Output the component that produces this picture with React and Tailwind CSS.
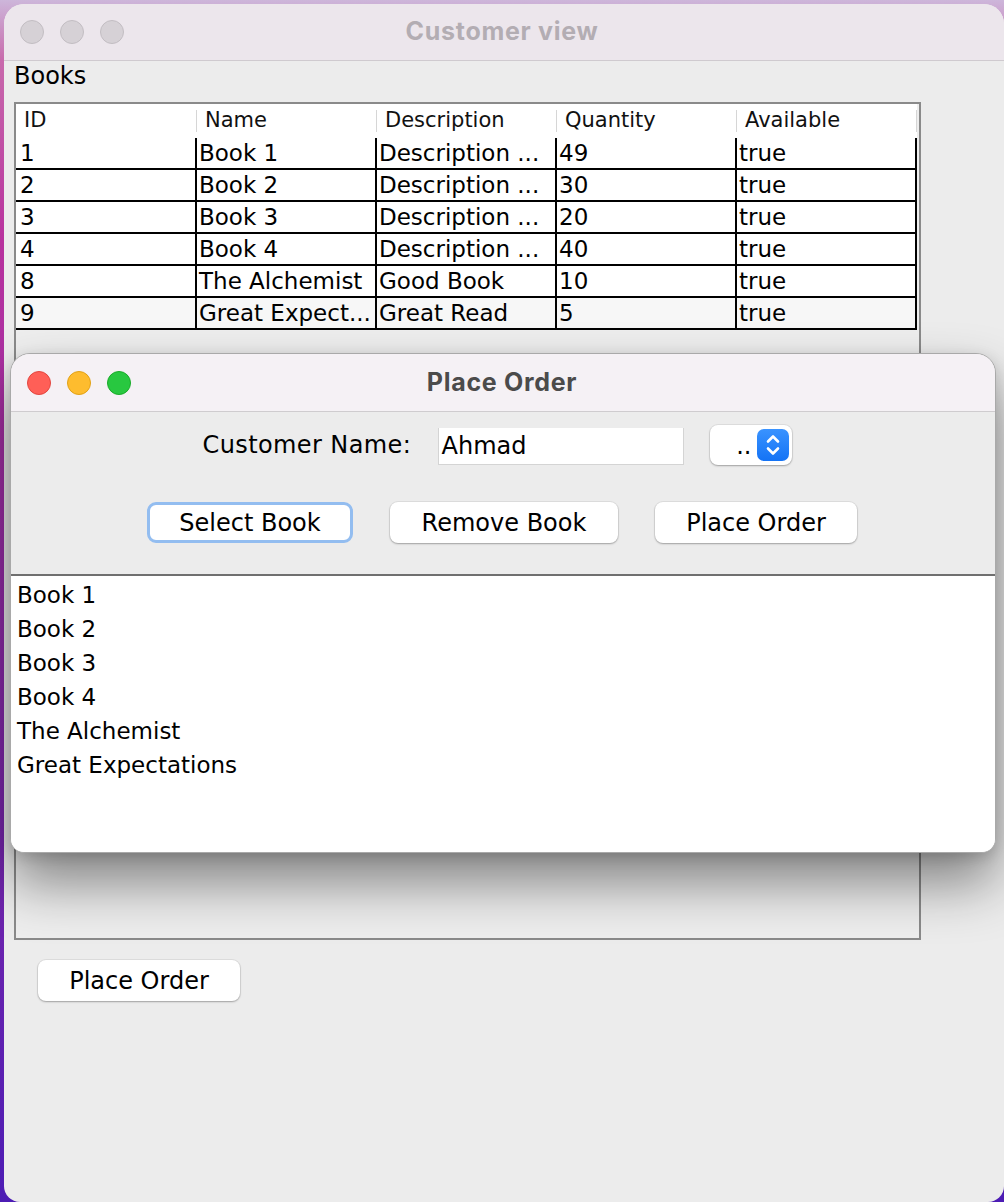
import React from 'react';

const books = [
  { id: 1, name: 'Book 1', desc: 'Description ...', qty: 49, avail: 'true' },
  { id: 2, name: 'Book 2', desc: 'Description ...', qty: 30, avail: 'true' },
  { id: 3, name: 'Book 3', desc: 'Description ...', qty: 20, avail: 'true' },
  { id: 4, name: 'Book 4', desc: 'Description ...', qty: 40, avail: 'true' },
  { id: 8, name: 'The Alchemist', desc: 'Good Book', qty: 10, avail: 'true' },
  { id: 9, name: 'Great Expect...', desc: 'Great Read', qty: 5, avail: 'true' },
];

const selected = ['Book 1', 'Book 2', 'Book 3', 'Book 4', 'The Alchemist', 'Great Expectations'];

const columns = ['ID', 'Name', 'Description', 'Quantity', 'Available'];

// mac style push button
const MacButton = ({ children, width, focused }) => (
  <div
    className={
      focused
        ? 'h-[41px] rounded-[9px] border-[3px] border-[#93bdf0] bg-white flex items-center justify-center'
        : 'h-[41px] rounded-[8px] bg-white shadow-[0_1px_2px_rgba(0,0,0,0.28),0_0_0_1px_rgba(0,0,0,0.06)] flex items-center justify-center'
    }
    style={{ width }}
  >
    <span className="text-[24px] leading-none text-black">{children}</span>
  </div>
);

const TrafficLights = ({ active }) => (
  <div className="flex gap-[16px]">
    {active ? (
      <>
        <span className="w-[24px] h-[24px] rounded-full bg-[#ff5f57] border border-[#e2463f]" />
        <span className="w-[24px] h-[24px] rounded-full bg-[#febc2e] border border-[#e1a116]" />
        <span className="w-[24px] h-[24px] rounded-full bg-[#28c840] border border-[#1aab29]" />
      </>
    ) : (
      <>
        <span className="w-[24px] h-[24px] rounded-full bg-[#d6d1d6] border border-[#c2bdc2]" />
        <span className="w-[24px] h-[24px] rounded-full bg-[#d6d1d6] border border-[#c2bdc2]" />
        <span className="w-[24px] h-[24px] rounded-full bg-[#d6d1d6] border border-[#c2bdc2]" />
      </>
    )}
  </div>
);

const App = () => {
  return (
    <div className="relative w-[1004px] h-[1202px] overflow-hidden pt-[4px] pl-[4px] bg-[linear-gradient(180deg,#cdb6da_0%,#c86aac_5%,#b8329e_20%,#8a2aa8_55%,#4c1cb4_100%)] font-['DejaVu_Sans',sans-serif] text-black">
      {/* Customer view window */}
      <div className="w-[1000px] h-[1198px] rounded-t-[20px] rounded-b-[16px] bg-[#ececec] overflow-hidden flex flex-col">
        <div className="relative h-[57px] shrink-0 bg-[#ece6ec] border-b border-[#cfcacf] flex items-center pl-[16px]">
          <TrafficLights />
          <div className="absolute inset-0 flex items-center justify-center pr-[4px] font-['Inter',sans-serif] font-bold text-[25px] text-[#b3adb3] tracking-[0.7px]">
            Customer view
          </div>
        </div>

        <div className="h-[41px] px-[10px] pt-[1px] text-[24px] leading-[28px]">Books</div>

        <div className="ml-[10px] w-[907px] h-[838px] border-2 border-[#8a8a8a] bg-[#eeeeee]">
          <div className="w-[901px] bg-white">
            <div className="grid grid-cols-[181px_180px_180px_180px_180px] h-[34px]">
              {columns.map((c) => (
                <div key={c} className="relative pl-[8px] text-[21px] leading-[33px] text-[#111]">
                  {c}
                  <span className="absolute right-0 top-[6px] h-[22px] w-px bg-[#d6d6d6]" />
                </div>
              ))}
            </div>
            {books.map((b, i) => (
              <div
                key={b.id}
                className={
                  'grid grid-cols-[181px_180px_180px_180px_180px] h-[32px] border-b-2 border-black ' +
                  (i === books.length - 1 ? 'bg-[#f7f7f7]' : 'bg-white')
                }
              >
                {[b.id, b.name, b.desc, b.qty, b.avail].map((v, j) => (
                  <div
                    key={j}
                    className={
                      'border-r-2 border-black text-[23px] leading-[30px] whitespace-nowrap overflow-hidden ' +
                      (j === 0 ? 'pl-[4px]' : 'pl-[2px]')
                    }
                  >
                    {v}
                  </div>
                ))}
              </div>
            ))}
          </div>
        </div>

        <div className="mt-[20px] ml-[34px]">
          <MacButton width={202}>Place Order</MacButton>
        </div>
      </div>

      {/* Place Order dialog */}
      <div className="absolute left-[10px] top-[353px] w-[986px] h-[500px] rounded-t-[20px] rounded-b-[14px] bg-[#ececec] overflow-hidden flex flex-col border border-[#a9a9a9] shadow-[0_30px_55px_rgba(0,0,0,0.45),0_4px_14px_rgba(0,0,0,0.15)]">
        <div className="relative h-[58px] shrink-0 bg-[#f5f1f5] border-b border-[#cfcccf] flex items-center pl-[16px]">
          <TrafficLights active />
          <div className="absolute inset-0 flex items-center justify-center pr-[2px] font-['Inter',sans-serif] font-bold text-[25px] text-[#4b4b4b] tracking-[0.7px]">
            Place Order
          </div>
        </div>

        <div className="pt-[13px] h-[162px] shrink-0">
          <div className="flex items-center justify-center gap-[26px] pr-[12px] h-[40px]">
            <span className="w-[209px] text-[24px] tracking-[0.4px] whitespace-nowrap">Customer Name:</span>
            <div className="w-[246px] h-[37px] mt-[3px] bg-white border-l border-r border-b border-[#d4d4d4] pl-[3px] text-[24px] leading-[36px]">
              Ahmad
            </div>
            <div className="w-[82px] h-[40px] rounded-[8px] bg-white shadow-[0_1px_2px_rgba(0,0,0,0.28),0_0_0_1px_rgba(0,0,0,0.06)] flex items-center justify-end pr-[3px] gap-[5px]">
              <span className="text-[24px] leading-none mt-[2px]">..</span>
              <div className="w-[32px] h-[32px] rounded-[7px] bg-[linear-gradient(180deg,#3a93ff,#1473f5)] flex items-center justify-center">
                <svg width="18" height="26" viewBox="0 0 18 26" fill="none" stroke="white" strokeWidth="2.6" strokeLinecap="round" strokeLinejoin="round">
                  <path d="M4 9.5 L9 4.5 L14 9.5" />
                  <path d="M4 16.5 L9 21.5 L14 16.5" />
                </svg>
              </div>
            </div>
          </div>

          <div className="flex items-center justify-center gap-[37px] mt-[37px] pr-[2px]">
            <MacButton width={206} focused>Select Book</MacButton>
            <MacButton width={228}>Remove Book</MacButton>
            <MacButton width={202}>Place Order</MacButton>
          </div>
        </div>

        <div className="flex-1 bg-white border-t-2 border-[#6f6f6f] pt-[2px]">
          {selected.map((s) => (
            <div key={s} className="h-[34px] pl-[6px] text-[23px] leading-[34px]">
              {s}
            </div>
          ))}
        </div>
      </div>
    </div>
  );
};

export default App;
